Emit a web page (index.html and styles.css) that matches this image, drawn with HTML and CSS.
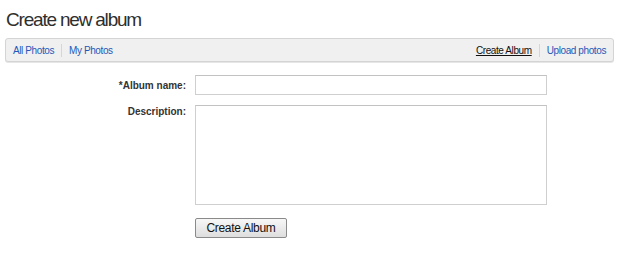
FILE: index.html
```html
<!DOCTYPE html>
<html>
<head>
<meta charset="utf-8">
<link rel="stylesheet" href="styles.css">
</head>
<body>
<h1 class="title">Create new album</h1>
<div class="navbar">
  <ul class="nav">
    <li><a href="#">All Photos</a></li>
    <li><a href="#">My Photos</a></li>
  </ul>
  <ul class="nav">
    <li><a href="#" class="current">Create Album</a></li>
    <li><a href="#">Upload photos</a></li>
  </ul>
</div>
<form class="form">
  <label class="label" for="name">*Album name:</label>
  <input class="field" id="name" type="text">
  <label class="label label-top" for="desc">Description:</label>
  <textarea class="field area" id="desc"></textarea>
  <span></span>
  <div><button class="btn" type="button">Create Album</button></div>
</form>
</body>
</html>
```
FILE: styles.css
```css
html, body {
  margin: 0;
  padding: 0;
  background: #fff;
}
body {
  padding: 0 6px 0 5px;
  font-family: "Liberation Sans", Arial, sans-serif;
  color: #333;
}
.title {
  margin: 0;
  padding: 9px 0 0 1px;
  font-size: 19px;
  line-height: 22px;
  font-weight: normal;
  letter-spacing: -1.2px;
  color: #2e2e2e;
}
.navbar {
  margin-top: 7px;
  height: 22px;
  display: flex;
  justify-content: space-between;
  align-items: center;
  background: #f0f0f0;
  border: 1px solid #d4d4d4;
  border-radius: 3px;
  box-shadow: 0 1px 0 #e6e6e6;
}
.nav {
  list-style: none;
  margin: 0;
  padding: 0 7px;
  display: flex;
  align-items: center;
}
.nav li {
  display: flex;
  align-items: center;
  font-size: 10px;
  letter-spacing: -0.4px;
}
.nav li + li::before {
  content: "";
  display: block;
  width: 1px;
  height: 13px;
  background: #d6d6d6;
  margin: 0 7px 0 7px;
}
.nav a {
  color: #2458b8;
  text-decoration: none;
}
.nav a.current {
  color: #111;
  text-decoration: underline;
}
.form {
  display: grid;
  grid-template-columns: 181px 352px;
  column-gap: 9px;
  row-gap: 10px;
  margin-top: 13px;
  align-items: center;
}
.label {
  text-align: right;
  font-size: 10px;
  font-weight: bold;
  color: #333;
}
.label-top {
  align-self: start;
  padding-top: 1px;
}
.field {
  box-sizing: border-box;
  margin: 0;
  width: 352px;
  border: 1px solid #cfcfcf;
  border-top-color: #c2c2c2;
  background: #fff;
  font-family: "Liberation Sans", Arial, sans-serif;
  font-size: 12px;
}
input.field {
  height: 20px;
}
.area {
  height: 100px;
  resize: none;
  display: block;
}
.btn {
  margin-top: 3px;
  width: 92px;
  height: 20px;
  padding: 0;
  font-family: "Liberation Sans", Arial, sans-serif;
  font-size: 12px;
  letter-spacing: -0.3px;
  color: #111;
  border: 1px solid #8a8a8a;
  border-radius: 2px;
  background: linear-gradient(#f7f7f7, #dedede);
}
```
